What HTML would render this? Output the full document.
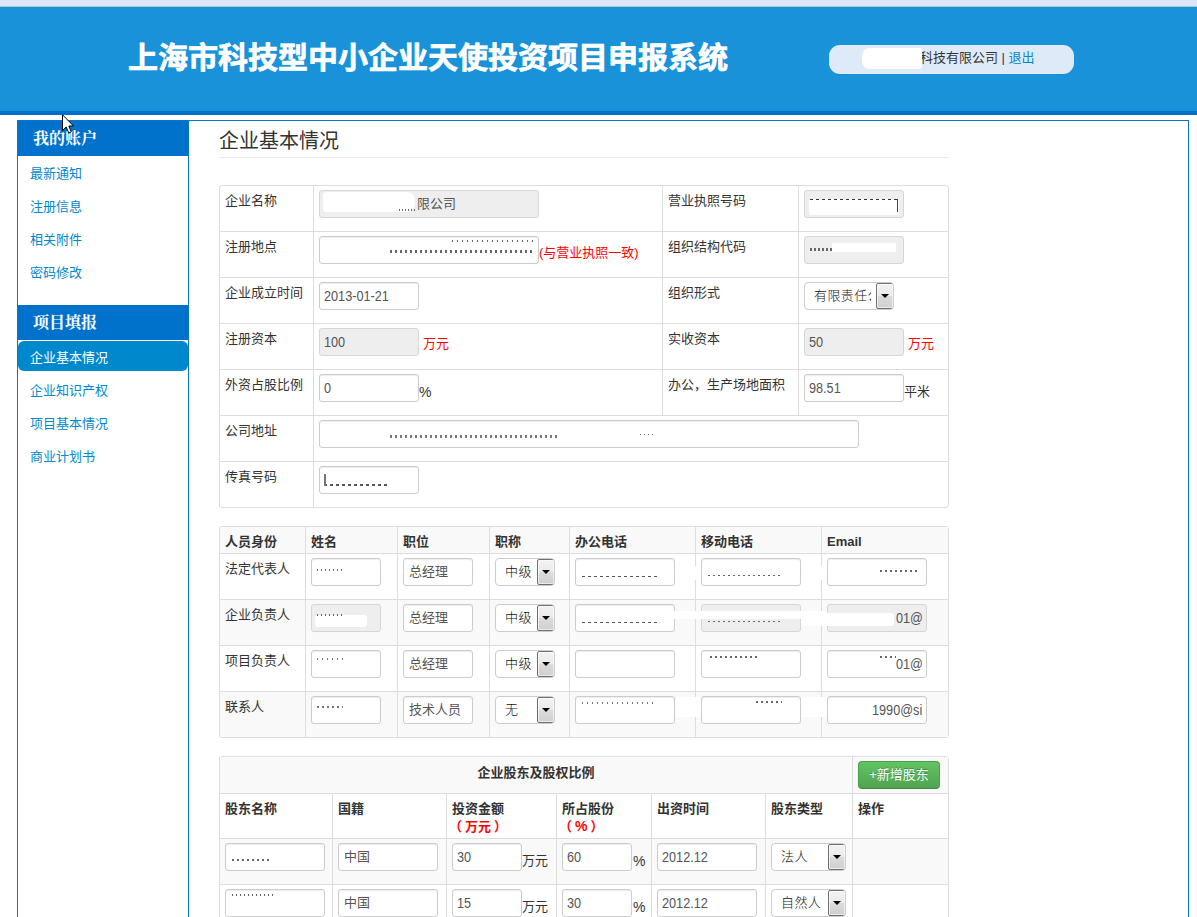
<!DOCTYPE html>
<html lang="zh-CN">
<head>
<meta charset="utf-8">
<title>上海市科技型中小企业天使投资项目申报系统</title>
<style>
*{box-sizing:border-box;}
html,body{margin:0;padding:0;}
body{width:1197px;height:917px;overflow:hidden;background:#fff;position:relative;
 font-family:"Liberation Sans","Noto Sans CJK SC",sans-serif;font-size:13px;line-height:18px;color:#333;}
a{color:#0088cc;text-decoration:none;}
#topstrip{position:absolute;left:0;top:0;width:1197px;height:7px;background:linear-gradient(#dde5fa 0 2px,#d2eef1 2px 3px,#dfe6f5 3px 4px,#d8e8fa 4px 6px);border-bottom:1px solid #bfc4cc;}
#header{position:absolute;left:0;top:7px;width:1197px;height:108px;background:#1a92d9;border-bottom:4px solid #0070cc;}
#title{position:absolute;left:128px;top:29px;-webkit-text-stroke:0.7px #fff;font-size:30px;line-height:44px;font-weight:bold;color:#fff;white-space:nowrap;letter-spacing:0;}
#user{position:absolute;left:829px;top:38px;width:245px;height:29px;border-radius:11px;background:#dfeaf9;}
#user .red{position:absolute;left:33px;top:3px;width:60px;height:21px;background:#fff;border-radius:8px 3px 3px 8px;z-index:2;}
#user .txt{position:absolute;left:91px;top:4px;white-space:nowrap;font-size:13px;line-height:18px;color:#333;}
#wrap{position:absolute;left:17px;top:120px;width:1172px;height:820px;border:1px solid #0a73cf;background:#fff;}
#side{position:absolute;left:0;top:0;width:171px;height:820px;border-right:1px solid #0a73cf;}
.sh{position:absolute;left:0;width:170px;height:35px;background:#0072cc;color:#fff;font-weight:bold;font-size:16px;line-height:35px;padding-left:15px;
 font-family:"Liberation Serif","Noto Serif CJK SC",serif;}
.sl{position:absolute;left:12px;margin-top:1px;font-size:13px;line-height:18px;color:#0088cc;white-space:nowrap;}
.sa{position:absolute;left:0;top:220px;width:170px;height:30px;background:#0088cc;border-radius:6px;}
#main{position:absolute;left:201px;top:0;width:731px;}
h2{position:absolute;left:0;top:5px;margin:0;font-size:20px;line-height:30px;font-weight:normal;color:#333;white-space:nowrap;}
.hr{position:absolute;left:0;top:36px;width:730px;height:1px;background:#e9e9e9;}
table{position:absolute;left:0;width:730px;border-collapse:separate;border-spacing:0;table-layout:fixed;border:1px solid #ddd;border-left:0;border-radius:4px;}
td{border-top:1px solid #ddd;border-left:1px solid #ddd;padding:4px 5px;vertical-align:top;font-size:13px;line-height:18px;white-space:nowrap;overflow:hidden;}
tr:first-child td{border-top:0;}
.t{position:relative;top:2px;}
.in{display:inline-block;vertical-align:top;height:28px;border:1px solid #ccc;border-radius:4px;background:#fff;padding:4px 5px;font-size:13px;line-height:18px;color:#555;
 box-shadow:inset 0 1px 1px rgba(0,0,0,.075);margin-bottom:9px;border-radius:3px;overflow:hidden;white-space:nowrap;}
.in.dis{background:#eee;border-color:#d6d6d6;box-shadow:none;}
.red{color:#f00;}
.n{display:inline-block;font-size:14px;transform:scaleX(.905);transform-origin:0 50%;margin-left:-1px;}
.sel{display:inline-block;vertical-align:top;position:relative;height:28px;border:1px solid #ccc;border-radius:4px;background:#fff;padding:4px 0 4px 9px;font-size:13px;line-height:18px;color:#111;margin-bottom:9px;overflow:hidden;white-space:nowrap;
 font-family:"Liberation Sans","Noto Sans CJK SC",sans-serif;font-weight:300;letter-spacing:.4px;}
.sel i{position:absolute;right:-1px;top:0;width:18px;height:26px;border:1px solid #707070;border-radius:2px;background:linear-gradient(#f2f2f2,#eaeaea 49%,#dcdcdc 50%,#cfcfcf);box-shadow:-5px 0 0 #fff, inset 0 0 0 1px rgba(255,255,255,.6);}
.sel i:after{content:"";position:absolute;left:4px;top:10px;border:4px solid transparent;border-top:4.5px solid #000;border-bottom:0;}
.u{display:inline-block;vertical-align:top;margin-top:9px;}
b{font-weight:bold;}
.btn{display:inline-block;width:82px;height:28px;border:1px solid #4a9f4a;border-bottom-color:#3f8a3f;border-radius:4px;background:linear-gradient(#62c462,#51a351);color:#fff;font-size:13px;line-height:26px;text-align:center;
 font-family:"Liberation Sans","Noto Sans CJK SC",sans-serif;font-weight:400;text-shadow:0 -1px 0 rgba(0,0,0,.25);}
#ov i{position:absolute;display:block;background:#fff;}
#ov u{position:absolute;display:block;text-decoration:none;}
</style>
</head>
<body>
<div id="topstrip"></div>
<div id="header">
  <div id="title">上海市科技型中小企业天使投资项目申报系统</div>
  <div id="user"><div class="red"></div><div class="txt">科技有限公司 | <a>退出</a></div></div>
</div>
<div id="wrap">
  <div id="side">
    <div class="sh" style="top:0">我的账户</div>
    <a class="sl" style="top:43px">最新通知</a>
    <a class="sl" style="top:76px">注册信息</a>
    <a class="sl" style="top:109px">相关附件</a>
    <a class="sl" style="top:142px">密码修改</a>
    <div class="sh" style="top:184px">项目填报</div>
    <div class="sa"></div>
    <a class="sl" style="top:227px;color:#fff">企业基本情况</a>
    <a class="sl" style="top:260px">企业知识产权</a>
    <a class="sl" style="top:293px">项目基本情况</a>
    <a class="sl" style="top:326px">商业计划书</a>
  </div>
  <div id="main">
    <h2>企业基本情况</h2>
    <div class="hr"></div>

    <table style="top:64px">
      <colgroup><col style="width:94px"><col style="width:349px"><col style="width:136px"><col style="width:150px"></colgroup>
      <tr style="height:45px"><td class="l"><span class="t">企业名称</span></td><td><span class="in dis" style="width:220px;padding-left:97px">限公司</span></td><td class="l"><span class="t">营业执照号码</span></td><td><span class="in dis" style="width:100px"></span></td></tr>
      <tr style="height:46px"><td class="l"><span class="t">注册地点</span></td><td><span class="in" style="width:220px"></span><span class="u red" style="margin-top:8px">(与营业执照一致)</span></td><td class="l"><span class="t">组织结构代码</span></td><td><span class="in dis" style="width:100px"></span></td></tr>
      <tr style="height:46px"><td class="l"><span class="t">企业成立时间</span></td><td><span class="in" style="width:100px"><span class="n">2013-01-21</span></span></td><td class="l"><span class="t">组织形式</span></td><td><span class="sel" style="width:90px">有限责任公司<i></i></span></td></tr>
      <tr style="height:46px"><td class="l"><span class="t">注册资本</span></td><td><span class="in dis" style="width:100px"><span class="n">100</span></span><span class="u red" style="margin-left:4px;margin-top:7px">万元</span></td><td class="l"><span class="t">实收资本</span></td><td><span class="in dis" style="width:100px"><span class="n">50</span></span><span class="u red" style="margin-left:4px;margin-top:7px">万元</span></td></tr>
      <tr style="height:46px"><td class="l"><span class="t">外资占股比例</span></td><td><span class="in" style="width:100px"><span class="n">0</span></span><span class="u" style="font-size:14px">%</span></td><td class="l"><span class="t">办公，生产场地面积</span></td><td><span class="in" style="width:100px"><span class="n">98.51</span></span><span class="u">平米</span></td></tr>
      <tr style="height:46px"><td class="l"><span class="t">公司地址</span></td><td colspan="3"><span class="in" style="width:540px"></span></td></tr>
      <tr style="height:46px"><td class="l"><span class="t">传真号码</span></td><td colspan="3"><span class="in" style="width:100px"></span></td></tr>
    </table>

    <table style="top:405px" class="t2">
      <colgroup><col style="width:86px"><col style="width:92px"><col style="width:92px"><col style="width:80px"><col style="width:126px"><col style="width:126px"><col style="width:127px"></colgroup>
      <tr style="height:26px;background:#f9f9f9"><td class="l"><span class="t"><b>人员身份</b></span></td><td class="l"><span class="t"><b>姓名</b></span></td><td class="l"><span class="t"><b>职位</b></span></td><td class="l"><span class="t"><b>职称</b></span></td><td class="l"><span class="t"><b>办公电话</b></span></td><td class="l"><span class="t"><b>移动电话</b></span></td><td class="l"><span class="t"><b>Email</b></span></td></tr>
      <tr style="height:46px"><td class="l"><span class="t">法定代表人</span></td><td><span class="in" style="width:70px"></span></td><td><span class="in" style="width:70px">总经理</span></td><td><span class="sel" style="width:60px">中级<i></i></span></td><td><span class="in" style="width:100px"></span></td><td><span class="in" style="width:100px"></span></td><td><span class="in" style="width:100px"></span></td></tr>
      <tr style="height:46px;background:#f9f9f9"><td class="l"><span class="t">企业负责人</span></td><td><span class="in dis" style="width:70px"></span></td><td><span class="in" style="width:70px">总经理</span></td><td><span class="sel" style="width:60px">中级<i></i></span></td><td><span class="in" style="width:100px"></span></td><td><span class="in dis" style="width:100px"></span></td><td><span class="in dis" style="width:100px;padding-left:69px"><span class="n">01@</span></span></td></tr>
      <tr style="height:46px"><td class="l"><span class="t">项目负责人</span></td><td><span class="in" style="width:70px"></span></td><td><span class="in" style="width:70px">总经理</span></td><td><span class="sel" style="width:60px">中级<i></i></span></td><td><span class="in" style="width:100px"></span></td><td><span class="in" style="width:100px"></span></td><td><span class="in" style="width:100px;padding-left:69px"><span class="n">01@</span></span></td></tr>
      <tr style="height:46px;background:#f9f9f9"><td class="l"><span class="t">联系人</span></td><td><span class="in" style="width:70px"></span></td><td><span class="in" style="width:70px">技术人员</span></td><td><span class="sel" style="width:60px">无<i></i></span></td><td><span class="in" style="width:100px"></span></td><td><span class="in" style="width:100px"></span></td><td><span class="in" style="width:100px;padding-left:45px"><span class="n">1990@si</span></span></td></tr>
    </table>

    <table style="top:635px" class="t3">
      <colgroup><col style="width:113px"><col style="width:114px"><col style="width:110px"><col style="width:95px"><col style="width:114px"><col style="width:87px"><col style="width:96px"></colgroup>
      <tr style="height:36px;background:#f9f9f9"><td colspan="6" style="text-align:center;padding-top:7px"><b>企业股东及股权比例</b></td><td style="padding:4px 0 0 5px"><span class="btn">+新增股东</span></td></tr>
      <tr style="height:45px"><td class="l"><span class="t"><b>股东名称</b></span></td><td class="l"><span class="t"><b>国籍</b></span></td><td class="l"><span class="t"><b>投资金额<br><span class="red" style="margin-left:-3px">（<span style="margin:0 3px">万元</span>）</span></b></span></td><td class="l"><span class="t"><b>所占股份<br><span class="red" style="margin-left:-3px">（<span style="margin:0 3px;font-size:14px;line-height:0">%</span>）</span></b></span></td><td class="l"><span class="t"><b>出资时间</b></span></td><td class="l"><span class="t"><b>股东类型</b></span></td><td class="l"><span class="t"><b>操作</b></span></td></tr>
      <tr style="height:46px;background:#f9f9f9"><td><span class="in" style="width:100px"></span></td><td><span class="in" style="width:100px">中国</span></td><td><span class="in" style="width:70px"><span class="n">30</span></span><span class="u">万元</span></td><td><span class="in" style="width:70px"><span class="n">60</span></span><span class="u" style="margin-left:1px;font-size:14px">%</span></td><td><span class="in" style="width:100px"><span class="n">2012.12</span></span></td><td><span class="sel" style="width:75px">法人<i></i></span></td><td></td></tr>
      <tr style="height:46px"><td><span class="in" style="width:100px"></span></td><td><span class="in" style="width:100px">中国</span></td><td><span class="in" style="width:70px"><span class="n">15</span></span><span class="u">万元</span></td><td><span class="in" style="width:70px"><span class="n">30</span></span><span class="u" style="margin-left:1px;font-size:14px">%</span></td><td><span class="in" style="width:100px"><span class="n">2012.12</span></span></td><td><span class="sel" style="width:75px">自然人<i></i></span></td><td></td></tr>
    </table>
  </div>
</div>
<div id="ov">
  <i style="left:323px;top:192px;width:92px;height:20px;border-radius:3px 8px 8px 3px"></i>
  <i style="left:809px;top:199px;width:90px;height:16px;border-radius:2px"></i>
  <i style="left:832px;top:243px;width:64px;height:9px"></i>
  <i style="left:315px;top:615px;width:52px;height:12px;border-radius:3px"></i>
  <i style="left:674px;top:611px;width:153px;height:8px"></i>
  <i style="left:801px;top:613px;width:93px;height:13px;border-radius:3px"></i>
  <i style="left:676px;top:566px;width:25px;height:14px"></i>
  <i style="left:801px;top:566px;width:26px;height:14px"></i>
  <i style="left:676px;top:697px;width:25px;height:20px"></i>
  <i style="left:801px;top:697px;width:26px;height:20px"></i>
  <u style="left:399px;top:209px;width:16px;height:2px;background:repeating-linear-gradient(90deg,#666 0 1px,transparent 1px 3px)"></u>
  <u style="left:390px;top:250px;width:145px;height:3px;background:repeating-linear-gradient(90deg,#666 0 2px,transparent 2px 5px)"></u>
  <u style="left:452px;top:240px;width:83px;height:2px;background:repeating-linear-gradient(90deg,#666 0 1px,transparent 1px 5px)"></u>
  <u style="left:810px;top:199px;width:87px;height:1px;background:repeating-linear-gradient(90deg,#333 0 3px,transparent 3px 6px)"></u>
  <u style="left:897px;top:199px;width:1px;height:13px;background:repeating-linear-gradient(90deg,#444 0 1px,transparent 1px 1px)"></u>
  <u style="left:810px;top:248px;width:22px;height:3px;background:repeating-linear-gradient(90deg,#666 0 2px,transparent 2px 4px)"></u>
  <u style="left:390px;top:435px;width:168px;height:3px;background:repeating-linear-gradient(90deg,#777 0 2px,transparent 2px 5px)"></u>
  <u style="left:640px;top:434px;width:16px;height:1px;background:repeating-linear-gradient(90deg,#777 0 1px,transparent 1px 4px)"></u>
  <u style="left:324px;top:484px;width:66px;height:2px;background:repeating-linear-gradient(90deg,#555 0 3px,transparent 3px 6px)"></u>
  <u style="left:324px;top:474px;width:2px;height:12px;background:repeating-linear-gradient(90deg,#777 0 2px,transparent 2px 2px)"></u>
  <u style="left:317px;top:569px;width:28px;height:2px;background:repeating-linear-gradient(90deg,#666 0 1px,transparent 1px 4px)"></u>
  <u style="left:582px;top:576px;width:78px;height:1px;background:repeating-linear-gradient(90deg,#555 0 3px,transparent 3px 6px)"></u>
  <u style="left:708px;top:575px;width:72px;height:1px;background:repeating-linear-gradient(90deg,#666 0 2px,transparent 2px 5px)"></u>
  <u style="left:880px;top:570px;width:40px;height:2px;background:repeating-linear-gradient(90deg,#666 0 2px,transparent 2px 5px)"></u>
  <u style="left:317px;top:614px;width:28px;height:2px;background:repeating-linear-gradient(90deg,#666 0 1px,transparent 1px 4px)"></u>
  <u style="left:582px;top:622px;width:78px;height:1px;background:repeating-linear-gradient(90deg,#555 0 3px,transparent 3px 6px)"></u>
  <u style="left:708px;top:621px;width:72px;height:1px;background:repeating-linear-gradient(90deg,#666 0 2px,transparent 2px 5px)"></u>
  <u style="left:710px;top:656px;width:50px;height:2px;background:repeating-linear-gradient(90deg,#666 0 2px,transparent 2px 5px)"></u>
  <u style="left:880px;top:656px;width:16px;height:2px;background:repeating-linear-gradient(90deg,#666 0 2px,transparent 2px 5px)"></u>
  <u style="left:317px;top:658px;width:30px;height:2px;background:repeating-linear-gradient(90deg,#777 0 1px,transparent 1px 5px)"></u>
  <u style="left:317px;top:706px;width:26px;height:2px;background:repeating-linear-gradient(90deg,#777 0 2px,transparent 2px 5px)"></u>
  <u style="left:582px;top:702px;width:72px;height:2px;background:repeating-linear-gradient(90deg,#777 0 1px,transparent 1px 5px)"></u>
  <u style="left:756px;top:701px;width:26px;height:2px;background:repeating-linear-gradient(90deg,#666 0 2px,transparent 2px 5px)"></u>
  <u style="left:232px;top:859px;width:38px;height:2px;background:repeating-linear-gradient(90deg,#666 0 2px,transparent 2px 5px)"></u>
  <u style="left:232px;top:894px;width:42px;height:2px;background:repeating-linear-gradient(90deg,#666 0 1px,transparent 1px 4px)"></u>
</div>
<svg id="cur" width="14" height="21" viewBox="0 0 14 21" style="position:absolute;left:62px;top:114px"><path d="M0.5 0.8 L0.5 16.5 L4.2 13 L6.8 19 L9.3 17.9 L6.8 12 L11.6 12 Z" fill="#fff" stroke="#000" stroke-width="1" stroke-linejoin="miter"/></svg>
</body>
</html>
